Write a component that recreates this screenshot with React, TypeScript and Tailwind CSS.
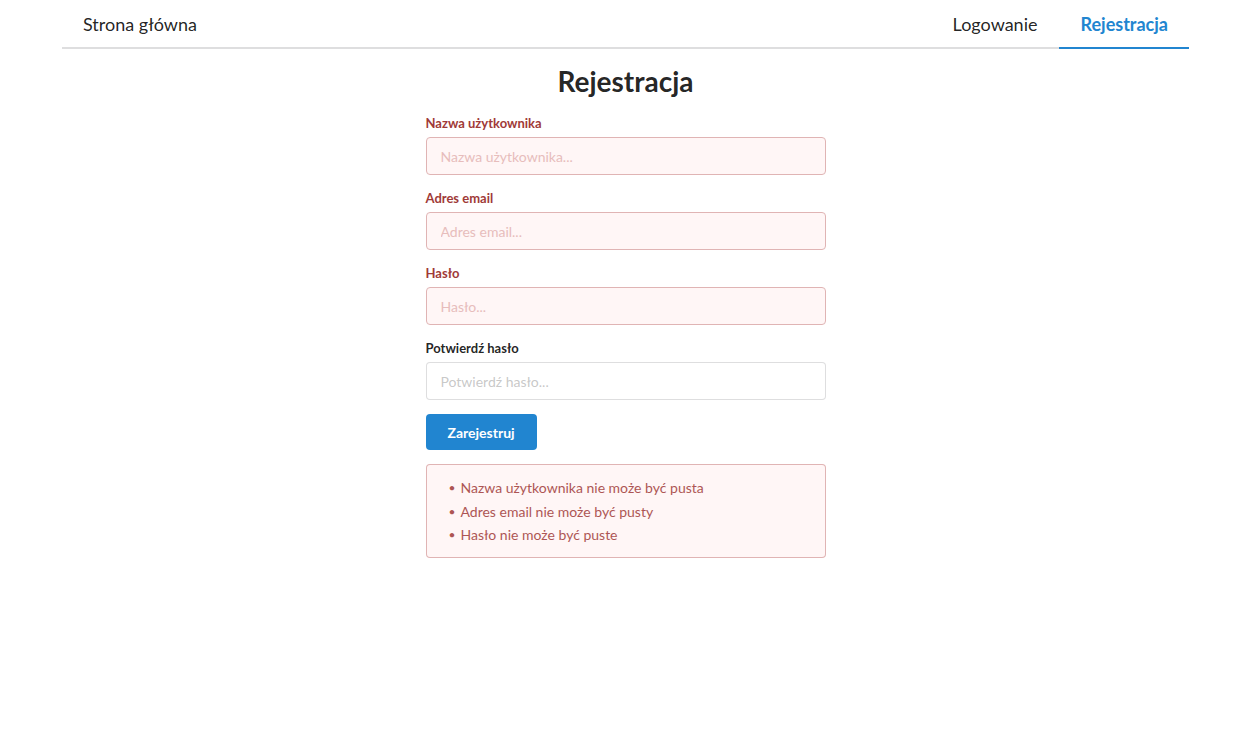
import React from "react";

const fields = [
  { label: "Nazwa użytkownika", placeholder: "Nazwa użytkownika...", error: true, type: "text" },
  { label: "Adres email", placeholder: "Adres email...", error: true, type: "email" },
  { label: "Hasło", placeholder: "Hasło...", error: true, type: "password" },
  { label: "Potwierdź hasło", placeholder: "Potwierdź hasło...", error: false, type: "password" },
];

const errors = [
  "Nazwa użytkownika nie może być pusta",
  "Adres email nie może być pusty",
  "Hasło nie może być puste",
];

export default function App() {
  const itemStyles =
    "px-[21px] pt-[13px] pb-[12px] leading-[22px] text-[18px] -mb-[2px] border-b-2";

  return (
    <div className="min-h-[737px] bg-white font-['Lato','Open_Sans',sans-serif] text-[14px] text-black/[.87]">
      <div className="w-[1127px] mx-auto">
        <div className="flex border-b-2 border-[#22242626]">
          <a className={`${itemStyles} border-transparent text-black/[.87]`}>
            Strona główna
          </a>
          <div className="ml-auto flex">
            <a className={`${itemStyles} border-transparent text-black/[.87]`}>
              Logowanie
            </a>
            <a className={`${itemStyles} pl-[22px] border-[#2185d0] text-[#2185d0] font-bold`}>
              Rejestracja
            </a>
          </div>
        </div>

        <div className="w-[400px] mx-auto">
          <h1 className="mt-[14px] mb-[15px] text-[28px] leading-[36px] font-bold text-center text-black/[.87]">
            Rejestracja
          </h1>

          <form onSubmit={(e) => e.preventDefault()}>
            {fields.map((f) => (
              <div key={f.label} className="mb-[14px]">
                <label
                  className={`block mb-[5px] text-[13px] leading-[18px] font-bold ${
                    f.error ? "text-[#9f3a38]" : "text-black/[.87]"
                  }`}
                >
                  {f.label}
                </label>
                <input
                  type={f.type}
                  placeholder={f.placeholder}
                  className={
                    f.error
                      ? "block w-full h-[38px] px-[14px] rounded-[4px] border border-[#e0b4b4] bg-[#fff6f6] text-[#9f3a38] placeholder:text-[#e7bdbc] outline-none"
                      : "block w-full h-[38px] px-[14px] rounded-[4px] border border-[#22242626] bg-white text-black/[.87] placeholder:text-[#bfbfbfde] outline-none"
                  }
                />
              </div>
            ))}

            <button
              type="submit"
              className="h-[36px] px-[22px] rounded-[4px] bg-[#2185d0] text-white font-bold text-[14px]"
            >
              Zarejestruj
            </button>

            <div className="mt-[14px] px-[21px] py-[14px] rounded-[4px] bg-[#fff6f6] text-[#9f3a38] shadow-[inset_0_0_0_1px_#e0b4b4]">
              <ul className="opacity-85">
                {errors.map((err) => (
                  <li
                    key={err}
                    className="relative ml-[14px] mb-[4.5px] last:mb-0 leading-[19px] before:content-['•'] before:absolute before:-left-[12px] before:text-[12px]"
                  >
                    {err}
                  </li>
                ))}
              </ul>
            </div>
          </form>
        </div>
      </div>
    </div>
  );
}
